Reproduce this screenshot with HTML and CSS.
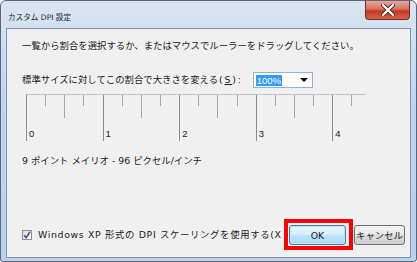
FILE: index.html
```html
<!DOCTYPE html>
<html lang="ja">
<head>
    <meta charset="UTF-8">
    <title>カスタム DPI 設定</title>
    <link rel="stylesheet" href="styles.css">
</head>
<body>
    <div class="window">
        <div class="titlebar">
            <span class="title">カスタム DPI 設定</span>
            <div class="close">
                <svg width="14" height="12" viewBox="0 0 14 12">
                    <path d="M2 1 L12 11 M12 1 L2 11" stroke="#5a1a10" stroke-width="4" stroke-linecap="round"/>
                    <path d="M2 1 L12 11 M12 1 L2 11" stroke="#fff" stroke-width="2.4" stroke-linecap="round"/>
                </svg>
            </div>
        </div>

        <div class="panel">
            <p class="hint">一覧から割合を選択するか、またはマウスでルーラーをドラッグしてください。</p>

            <div class="scale-row">
                <span class="scale-label">標準サイズに対してこの割合で大きさを変える<span class="key">(<u>S</u>):</span></span>
                <div class="select">
                    <span class="selected">100%</span>
                    <svg class="arrow" width="8" height="4" viewBox="0 0 8 4"><path d="M0 0 H8 L4 4 Z" fill="#000"/></svg>
                </div>
            </div>

            <div class="ruler">
                <div class="tick major"><span>0</span></div>
                <div class="tick"></div>
                <div class="tick half"></div>
                <div class="tick"></div>
                <div class="tick major"><span>1</span></div>
                <div class="tick"></div>
                <div class="tick half"></div>
                <div class="tick"></div>
                <div class="tick major"><span>2</span></div>
                <div class="tick"></div>
                <div class="tick half"></div>
                <div class="tick"></div>
                <div class="tick major"><span>3</span></div>
                <div class="tick"></div>
                <div class="tick half"></div>
                <div class="tick"></div>
                <div class="tick major"><span>4</span></div>
                <div class="tick"></div>
            </div>

            <p class="font-info">9 ポイント メイリオ - 96 ピクセル/インチ</p>

            <div class="footer">
                <span class="checkbox">
                    <svg width="8" height="8" viewBox="0 0 8 8"><path d="M1.2 4.2 L3.2 6.6 L7 0.8" stroke="#3b5aa0" stroke-width="1.6" fill="none"/></svg>
                </span>
                <span class="check-label">Windows XP 形式の DPI スケーリングを使用する(X</span>
                <div class="highlight">
                    <button class="btn default">OK</button>
                </div>
                <button class="btn">キャンセル</button>
            </div>
        </div>
    </div>
</body>
</html>
```

FILE: styles.css
```css
body {
    margin: 0;
    padding: 0;
    width: 417px;
    height: 262px;
    overflow: hidden;
    background: #fff;
    font-family: "DejaVu Sans", "Noto Sans CJK JP", sans-serif;
    color: #1a1a1a;
}
.window {
    box-sizing: border-box;
    width: 417px;
    height: 262px;
    border: 1px solid #55677c;
    border-radius: 6px 6px 3px 3px;
    background: linear-gradient(to bottom, #d9e5f2, #c3d5e9 40%, #bcd0e7);
    display: flex;
    flex-direction: column;
    padding: 0 5px 3px 5px;
}
.titlebar {
    height: 27px;
    display: flex;
    align-items: flex-start;
    justify-content: space-between;
}
.title {
    font-size: 7.6px;
    margin-top: 10px;
    margin-left: 2px;
    color: #222;
}
.close {
    width: 45px;
    height: 19px;
    margin-right: 1px;
    box-sizing: border-box;
    border: 1px solid #7a2b20;
    border-top: none;
    border-radius: 0 0 4px 4px;
    background: linear-gradient(to bottom, #e8a796, #d6705c 45%, #c23a22 55%, #d5604a);
    display: flex;
    align-items: center;
    justify-content: center;
}
.panel {
    flex: 1;
    background: #f0f0f0;
    border: 1px solid #7f93aa;
    display: flex;
    flex-direction: column;
    padding: 0 5px 7px 0;
    font-size: 9.4px;
}
.hint {
    margin: 11px 0 0 15px;
    line-height: 12px;
    white-space: nowrap;
}
.scale-row {
    display: flex;
    align-items: center;
    margin: 20px 0 0 15px;
    height: 16px;
}
.scale-label {
    white-space: nowrap;
    line-height: 12px;
}
.scale-label .key {
    letter-spacing: 1.8px;
    margin-left: 1px;
}
.select {
    box-sizing: border-box;
    width: 60px;
    height: 16px;
    margin-left: 10px;
    border: 1px solid #8fb0d8;
    background: #fff;
    display: flex;
    align-items: center;
    justify-content: space-between;
    padding: 0 4px 0 2px;
}
.selected {
    background: #3399ff;
    color: #fff;
    font-family: "Liberation Sans", sans-serif;
    font-size: 9.5px;
    line-height: 11px;
    padding: 0 1px;
}
.ruler {
    margin: 6px 0 0 19px;
    width: 340px;
    border-top: 1px solid #c4c4c4;
    display: grid;
    grid-template-columns: repeat(18, 19.15px);
    align-items: start;
}
.tick {
    height: 11px;
    border-left: 1px solid #a6a6a6;
}
.tick.half {
    height: 23px;
}
.tick.major {
    height: 46px;
    border-left-color: #8c8c8c;
    display: flex;
    align-items: flex-end;
}
.tick span {
    font-family: "Liberation Sans", sans-serif;
    font-size: 9.5px;
    line-height: 11px;
    padding: 0 0 2px 2px;
    color: #222;
}
.font-info {
    margin: 14px 0 0 15px;
    line-height: 12px;
    white-space: nowrap;
}
.footer {
    margin-top: auto;
    display: flex;
    align-items: center;
    padding-left: 15px;
}
.checkbox {
    box-sizing: border-box;
    width: 10px;
    height: 10px;
    border: 1px solid #8e8f8f;
    background: linear-gradient(135deg, #dcdcdc, #fbfbfb);
    display: flex;
    align-items: center;
    justify-content: center;
    margin-right: 6px;
}
.check-label {
    flex: 1;
    white-space: nowrap;
    overflow: hidden;
    line-height: 12px;
    letter-spacing: 0.65px;
}
.highlight {
    border: 4px solid #ff0000;
    padding: 2px 3px 1px 1px;
    display: flex;
}
.btn {
    box-sizing: border-box;
    height: 20px;
    width: 51px;
    margin: 0;
    border: 1px solid #707070;
    border-radius: 3px;
    background: linear-gradient(to bottom, #f2f2f2, #ebebeb 45%, #dddddd 50%, #cfcfcf);
    font-family: "DejaVu Sans", "Noto Sans CJK JP", sans-serif;
    font-size: 9.4px;
    color: #1a1a1a;
    padding: 0;
    margin-left: 1px;
}
.btn.default {
    width: 57px;
    margin-left: 0;
    border-color: #3c7fb1;
    background: linear-gradient(to bottom, #eaf6fd, #d9f0fc 45%, #bee6fd 50%, #a7d9f5);
    box-shadow: inset 0 0 0 1px #bfe4f8;
}
```
